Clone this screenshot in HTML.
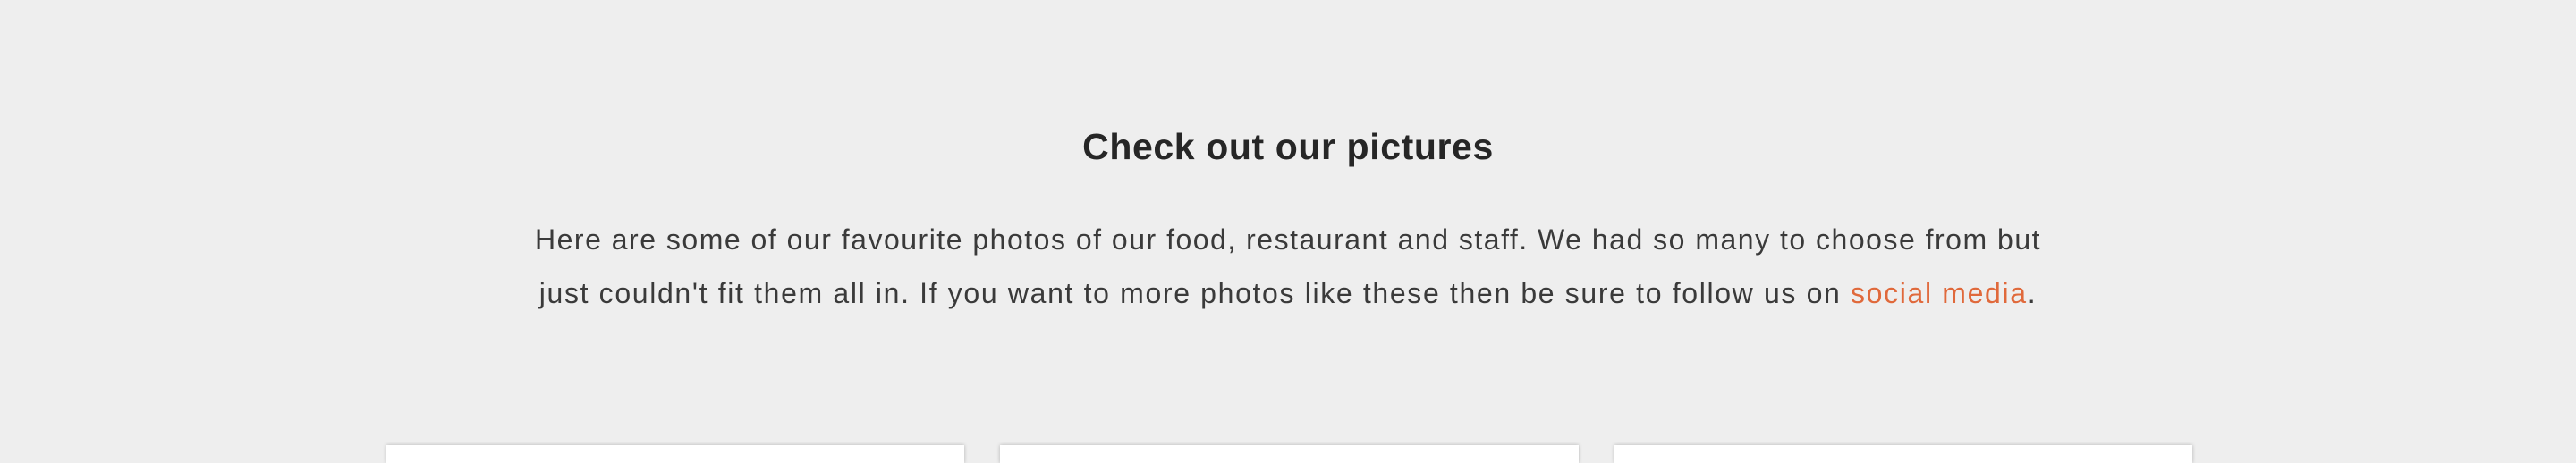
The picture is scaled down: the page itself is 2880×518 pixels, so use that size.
<!DOCTYPE html>
<html><head><style>
html,body{margin:0;padding:0;background:#eeeeee;width:2880px;height:500px;overflow:hidden;font-family:"Liberation Sans",sans-serif;}
h2{position:absolute;left:0;width:2880px;top:136px;margin:0;text-align:center;font-size:41px;font-weight:bold;color:#262626;line-height:56px;letter-spacing:0.6px;}
p{position:absolute;left:0;width:2880px;top:238px;margin:0;text-align:center;font-size:32px;line-height:60px;color:#3a3a3a;letter-spacing:1.5px;white-space:nowrap;}
p span{letter-spacing:1.65px;}
a{color:#e0693b;text-decoration:none;}
.c{position:absolute;top:498px;height:20px;background:#fff;box-shadow:0 0 4px rgba(0,0,0,0.25);}
</style></head><body>
<h2>Check out our pictures</h2>
<p>Here are some of our favourite photos of our food, restaurant and staff. We had so many to choose from but<br><span>just couldn't fit them all in. If you want to more photos like these then be sure to follow us on <a>social media</a>.</span></p>
<div class="c" style="left:432px;width:646px"></div>
<div class="c" style="left:1118px;width:647px"></div>
<div class="c" style="left:1805px;width:646px"></div>
</body></html>
